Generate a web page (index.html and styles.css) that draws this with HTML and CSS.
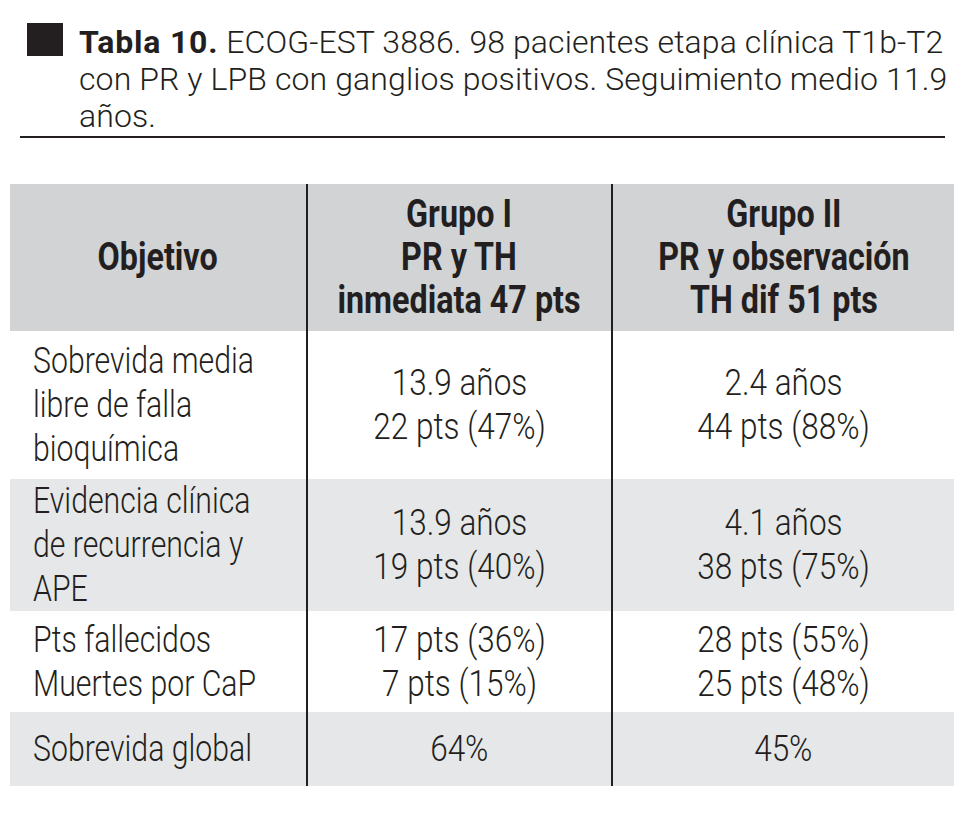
FILE: index.html
```html
<!DOCTYPE html>
<html lang="es">
<head>
<meta charset="utf-8">
<title>Tabla 10</title>
<link rel="stylesheet" href="styles.css">
</head>
<body>
<div class="caption">
  <div class="marker"></div>
  <p class="caption-text"><b>Tabla 10.</b> ECOG-EST 3886. 98 pacientes etapa clínica T1b-T2<br>con PR y LPB con ganglios positivos. Seguimiento medio 11.9<br>años.</p>
</div>
<div class="rule"></div>
<div class="table">
  <div class="cell head first"><span class="txt">Objetivo</span></div>
  <div class="cell head"><span class="txt">Grupo I<br>PR y TH<br>inmediata 47 pts</span></div>
  <div class="cell head"><span class="txt">Grupo II<br>PR y observación<br>TH dif 51 pts</span></div>

  <div class="cell first"><span class="txt">Sobrevida media<br>libre de falla<br>bioquímica</span></div>
  <div class="cell"><span class="txt">13.9 años<br>22 pts (47%)</span></div>
  <div class="cell"><span class="txt">2.4 años<br>44 pts (88%)</span></div>

  <div class="cell first shade"><span class="txt">Evidencia clínica<br>de recurrencia y<br>APE</span></div>
  <div class="cell shade"><span class="txt">13.9 años<br>19 pts (40%)</span></div>
  <div class="cell shade"><span class="txt">4.1 años<br>38 pts (75%)</span></div>

  <div class="cell first"><span class="txt">Pts fallecidos<br>Muertes por CaP</span></div>
  <div class="cell"><span class="txt">17 pts (36%)<br>7 pts (15%)</span></div>
  <div class="cell"><span class="txt">28 pts (55%)<br>25 pts (48%)</span></div>

  <div class="cell first shade"><span class="txt">Sobrevida global</span></div>
  <div class="cell shade"><span class="txt">64%</span></div>
  <div class="cell shade"><span class="txt">45%</span></div>
</div>
</body>
</html>
```

FILE: styles.css
```css
html, body {
  margin: 0;
  padding: 0;
  background: #ffffff;
}

body {
  color: #231f20;
  font-family: Roboto, "Liberation Sans", Arial, sans-serif;
}

.caption {
  display: flex;
  align-items: flex-start;
  padding: 24px 0 0 27px;
  gap: 16px;
}

.marker {
  flex: 0 0 36px;
  height: 33px;
  margin-top: -1px;
  background: #231f20;
}

.caption-text {
  margin: 0;
  font-weight: 300;
  font-size: 32px;
  line-height: 37px;
  letter-spacing: 0.1px;
  white-space: nowrap;
}

.caption-text b {
  font-weight: 700;
  letter-spacing: 0.8px;
}

.rule {
  margin: 1px 30px 0 20px;
  height: 2px;
  background: #231f20;
}

.table {
  display: grid;
  grid-template-columns: 296px 305px 343px;
  grid-template-rows: 147px 148px 132px 101px 74px;
  margin: 46px 0 0 10px;
  width: 944px;
  font-weight: 300;
  font-size: 36px;
  line-height: 44px;
}

.cell {
  display: flex;
  align-items: center;
  justify-content: center;
  text-align: center;
  border-left: 2px solid #231f20;
  box-sizing: border-box;
  background: #ffffff;
}

.txt {
  display: inline-block;
  white-space: nowrap;
  transform: scaleX(0.875);
  transform-origin: center;
}

.cell.first {
  border-left: none;
  justify-content: flex-start;
  text-align: left;
  padding-left: 23px;
}

.cell.first .txt {
  transform: scaleX(0.84);
  transform-origin: left center;
}

.cell.head {
  background: #d1d3d4;
  font-weight: 700;
  font-size: 38px;
  line-height: 43px;
}

.cell.head .txt {
  transform: scaleX(0.85);
}

.cell.head.first {
  justify-content: center;
  text-align: center;
  padding-left: 0;
}

.cell.head.first .txt {
  transform: scaleX(0.85);
  transform-origin: center;
}

.cell.shade {
  background: #e6e7e8;
}
```
